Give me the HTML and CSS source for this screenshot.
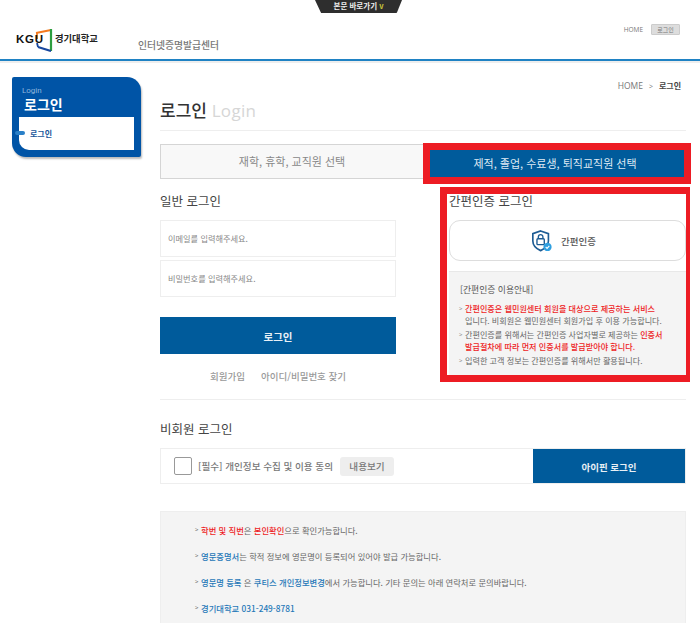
FILE: index.html
```html
<!DOCTYPE html>
<html lang="ko">
<head>
<meta charset="utf-8">
<title>로그인</title>
<link rel="stylesheet" href="styles.css">
</head>
<body>
<a class="skip" href="#main">본문 바로가기 <span class="skip-arrow">v</span></a>
<header class="header">
  <div class="brand">
    <span class="brand-kgu">KGU</span>
    <svg class="brand-mark" viewBox="0 0 18 24" width="18" height="24" aria-hidden="true">
      <path d="M1 5 L16 2" stroke="#f47a20" stroke-width="2.2" fill="none"/>
      <path d="M2 4 V11" stroke="#f47a20" stroke-width="1.8" fill="none"/>
      <path d="M16 1 V23" stroke="#2e9e3f" stroke-width="2.2" fill="none"/>
      <path d="M16 23 L3 19" stroke="#17479e" stroke-width="2.2" fill="none"/>
      <path d="M3 19 L2 15" stroke="#17479e" stroke-width="1.8" fill="none"/>
    </svg>
    <span class="brand-name">경기대학교</span>
  </div>
  <div class="site-title">인터넷증명발급센터</div>
  <nav class="util">
    <span class="util-home">HOME</span>
    <span class="util-btn">로그인</span>
  </nav>
</header>
<div class="layout">
  <aside class="side">
    <div class="side-en">Login</div>
    <div class="side-ko">로그인</div>
    <div class="side-menu">
      <span class="side-pill"></span>
      <span class="side-link">로그인</span>
    </div>
  </aside>
  <main class="main" id="main">
    <div class="crumb"><span>HOME</span><span class="crumb-sep">&gt;</span><b>로그인</b></div>
    <h1 class="page-title">로그인 <span class="page-title-en">Login</span></h1>
    <div class="tabs">
      <div class="tab">재학, 휴학, 교직원 선택</div>
      <div class="tab-on-frame"><div class="tab-on">제적, 졸업, 수료생, 퇴직교직원 선택</div></div>
    </div>
    <div class="login-cols">
      <section class="col-left">
        <h2 class="sec-title">일반 로그인</h2>
        <div class="field">이메일를 입력해주세요.</div>
        <div class="field">비밀번호를 입력해주세요.</div>
        <button class="btn-login">로그인</button>
        <div class="links"><span>회원가입</span><span>아이디/비밀번호 찾기</span></div>
      </section>
      <section class="col-right">
        <h2 class="sec-title">간편인증 로그인</h2>
        <div class="easy-btn">
          <svg viewBox="0 0 24 26" width="22" height="24" aria-hidden="true">
            <path d="M10.5 2 L19 5 V13 C19 18 15 21.5 10.5 23.5 C6 21.5 2 18 2 13 V5 Z" fill="none" stroke="#1d5c94" stroke-width="1.8"/>
            <rect x="6.5" y="10.5" width="8" height="6.5" rx="1" fill="none" stroke="#1d5c94" stroke-width="1.5"/>
            <path d="M8 10.5 V8.5 A2.5 2.5 0 0 1 13 8.5 V10.5" fill="none" stroke="#1d5c94" stroke-width="1.5"/>
            <circle cx="18" cy="19.5" r="4.5" fill="#2f9fe0"/>
            <path d="M16 19.5 L17.5 21 L20 18.2" fill="none" stroke="#fff" stroke-width="1.2"/>
          </svg>
          <span>간편인증</span>
        </div>
        <div class="easy-guide">
          <p class="guide-title">[간편인증 이용안내]</p>
          <ul class="guide-list">
            <li><em>간편인증은 웹민원센터 회원을 대상으로 제공하는 서비스</em><br>입니다. 비회원은 웹민원센터 회원가입 후 이용 가능합니다.</li>
            <li>간편인증를 위해서는 간편인증 사업자별로 제공하는 <em>인증서<br>발급절차에 따라 먼저 인증서를 발급받아야 합니다.</em></li>
            <li>입력한 고객 정보는 간편인증를 위해서만 활용됩니다.</li>
          </ul>
        </div>
      </section>
    </div>
    <h2 class="sec-title guest-title">비회원 로그인</h2>
    <div class="guest">
      <div class="guest-agree">
        <span class="check"></span>
        <span class="agree-text">[필수] 개인정보 수집 및 이용 동의</span>
        <span class="view-btn">내용보기</span>
      </div>
      <button class="btn-ipin">아이핀 로그인</button>
    </div>
    <ul class="notice">
      <li><em>학번 및 직번</em>은 <em>본인확인</em>으로 확인가능합니다.</li>
      <li><strong>영문증명서</strong>는 학적 정보에 영문명이 등록되어 있어야 발급 가능합니다.</li>
      <li><strong>영문명 등록</strong> 은 <strong>쿠티스 개인정보변경</strong>에서 가능합니다. 기타 문의는 아래 연락처로 문의바랍니다.</li>
      <li><strong>경기대학교 031-249-8781</strong></li>
    </ul>
  </main>
</div>
</body>
</html>
```
FILE: styles.css
```css
* { box-sizing: border-box; }
html, body { margin: 0; padding: 0; height: 623px; overflow: hidden; background: #fff; }
body { font-family: "Noto Sans CJK KR", "Noto Sans", sans-serif; color: #555; position: relative; }
h1, h2, p, ul { margin: 0; padding: 0; }
ul { list-style: none; }
em { font-style: normal; }

.skip {
  position: absolute; top: 0; left: 315px; width: 87px; height: 13px;
  background: #2e2e2e; color: #eee; font-size: 7.5px; font-weight: 700; line-height: 12px;
  text-align: center; text-decoration: none;
  clip-path: polygon(0 0, 100% 0, 94% 100%, 7% 100%);
  border-radius: 0 0 6px 6px;
}
.skip-arrow { color: #c7c33a; }

.header {
  height: 61px; border-bottom: 2px solid #1f82c4;
  display: flex; align-items: flex-start; box-shadow: 0 2px 0 #eee;
}
.brand { display: flex; align-items: center; margin: 27px 0 0 16px; width: 122px; height: 25px; }
.brand-kgu { font: 700 11.5px/1 "Liberation Sans", sans-serif; color: #111; letter-spacing: .8px; width: 19px; position: relative; z-index: 1; white-space: nowrap; }
.brand-mark { flex: none; margin-right: 2px; }
.brand-name { font-size: 9.3px; font-weight: 700; color: #222; margin-top: -3px; white-space: nowrap; }
.site-title { font-size: 9.8px; color: #777; margin-top: 37px; line-height: 16px; font-weight: 500; }
.util { margin: 24px 20px 0 auto; display: flex; align-items: center; gap: 8px; height: 11px; }
.util-home { font: 6.5px/1 "Open Sans", sans-serif; color: #777; margin-top: 2px; }
.util-btn { width: 29px; height: 11px; background: #ddd; border: 1px solid #ccc; border-radius: 1px; font-size: 6px; line-height: 9px; text-align: center; color: #777; }

.layout { display: flex; align-items: flex-start; padding-top: 16px; }
.side {
  width: 129px; height: 80px; margin-left: 12px; background: #0054a6;
  border-radius: 2px 14px 2px 14px; box-shadow: 1px 2px 2px #bbb;
  padding: 8px 7px 7px; flex: none;
}
.side-en { font: 8px/11px "Roboto", sans-serif; color: #8fb4dc; padding-left: 3px; }
.side-ko { font-size: 14px; line-height: 16px; font-weight: 700; color: #fff; padding-left: 5px; }
.side-menu {
  height: 33px; margin-top: 5px; background: #fff; border-radius: 0 0 0 10px;
  position: relative; display: flex; align-items: center; padding-left: 11px;
}
.side-pill { position: absolute; left: -4px; top: 14px; width: 10px; height: 4px; border-radius: 2px; background: #2a80c8; }
.side-link { font-size: 8px; font-weight: 700; color: #17569b; }

.main { width: 526px; margin-left: 19px; position: relative; flex: none; }
.crumb { display: flex; justify-content: flex-end; align-items: center; gap: 6px; height: 18px; padding-right: 5px; font: 8.5px/1 "Open Sans", "Noto Sans CJK KR", sans-serif; color: #777; }
.crumb b { color: #444; font-family: "Noto Sans CJK KR", sans-serif; font-weight: 700; font-size: 8px; }
.crumb-sep { font-size: 7px; }
.page-title { font-size: 17px; line-height: 24px; font-weight: 500; color: #333; margin-top: 3px; border-bottom: 1px solid #eee; height: 33px; }
.page-title-en { font: 400 17px/24px "Open Sans", sans-serif; color: #d6d6d6; letter-spacing: .3px; }

.tabs { display: flex; align-items: flex-start; margin-top: 11px; height: 42px; }
.tab { flex: none; width: 263px; height: 35px; margin-top: 2px; background: #f8f8f8; border: 1px solid #d5d5d5; border-right: 0; text-align: center; font-size: 11px; line-height: 33px; color: #888; }
.tab-on-frame { flex: none; width: 268px; height: 41px; border: 7px solid #ed1c24; margin-top: 1px; }
.tab-on { height: 100%; padding-right: 4px; background: #005b9b; color: #dfeaf4; text-align: center; font-size: 11px; line-height: 26px; }

.login-cols { display: flex; align-items: flex-start; height: 216px; border-bottom: 1px solid #eee; }
.col-left { width: 236px; padding-top: 7px; }
.sec-title { font-size: 12.5px; line-height: 20px; font-weight: 400; color: #444; }
.field { height: 37px; margin-top: 3px; border: 1px solid #eee; font-size: 8.2px; line-height: 35px; color: #888; padding-left: 7px; }
.col-left .sec-title + .field { margin-top: 9px; }
.btn-login { display: block; width: 100%; height: 37px; margin-top: 20px; background: #005b9b; color: #e8f0f6; border: 0; font: 700 10.5px/37px "Noto Sans CJK KR", sans-serif; }
.links { display: flex; justify-content: center; gap: 16px; margin-top: 15px; font-size: 9.5px; line-height: 14px; color: #999; font-weight: 500; }

.col-right { flex: none; width: 250px; height: 195px; margin-left: 44px; margin-top: 3px; border: 7px solid #ed1c24; border-right-width: 4px; padding: 0 0 0 2px; margin-right: -4px; }
.col-right .sec-title { line-height: 18px; margin-top: -2px; }
.easy-btn { height: 41px; margin-top: 10px; padding-right: 8px; border: 1px solid #ddd; border-radius: 11px; display: flex; align-items: center; justify-content: center; gap: 8px; font-size: 9.5px; font-weight: 500; color: #555; }
.easy-guide { height: 104px; margin-top: 10px; background: #f4f4f4; border-top: 1px solid #e8e8e8; padding: 11px 0 0 11px; font-size: 8.1px; line-height: 12px; color: #666; white-space: nowrap; }
.guide-title { font-size: 8.8px; font-weight: 400; color: #555; margin-bottom: 7px; line-height: 13px; }
.guide-list li { padding-left: 5px; margin-bottom: 2px; position: relative; }
.guide-list li::before { content: ">"; position: absolute; left: -1px; font-size: 6px; color: #888; }
.guide-list em { color: #ee1c25; font-weight: 500; }

.guest-title { margin-top: 19px; }
.guest { display: flex; height: 36px; margin-top: 9px; border: 1px solid #eee; }
.guest-agree { flex: 1; display: flex; align-items: center; padding-left: 13px; font-size: 9.6px; color: #777; }
.check { width: 18px; height: 18px; border: 1px solid #999; border-radius: 2px; background: #fff; margin-right: 6px; flex: none; }
.agree-text { margin-right: 7px; font-weight: 500; }
.view-btn { width: 54px; height: 19px; background: #eee; border-radius: 3px; text-align: center; line-height: 19px; font-weight: 500; color: #777; }
.btn-ipin { flex: none; width: 152px; height: 34px; background: #005b9b; color: #e8f0f6; border: 0; font: 700 9.5px/34px "Noto Sans CJK KR", sans-serif; }

.notice { margin-top: 27px; height: 130px; background: #f4f4f4; border: 1px solid #eee; padding: 11px 0 0 34px; font-size: 8.3px; line-height: 14px; color: #666; }
.notice li { position: relative; padding-left: 6px; margin-bottom: 12px; }
.notice li::before { content: ">"; position: absolute; left: 0; font-size: 6px; color: #666; }
.notice em { color: #ee1c25; font-weight: 500; }
.notice strong { color: #1f78b8; font-weight: 500; }
```
